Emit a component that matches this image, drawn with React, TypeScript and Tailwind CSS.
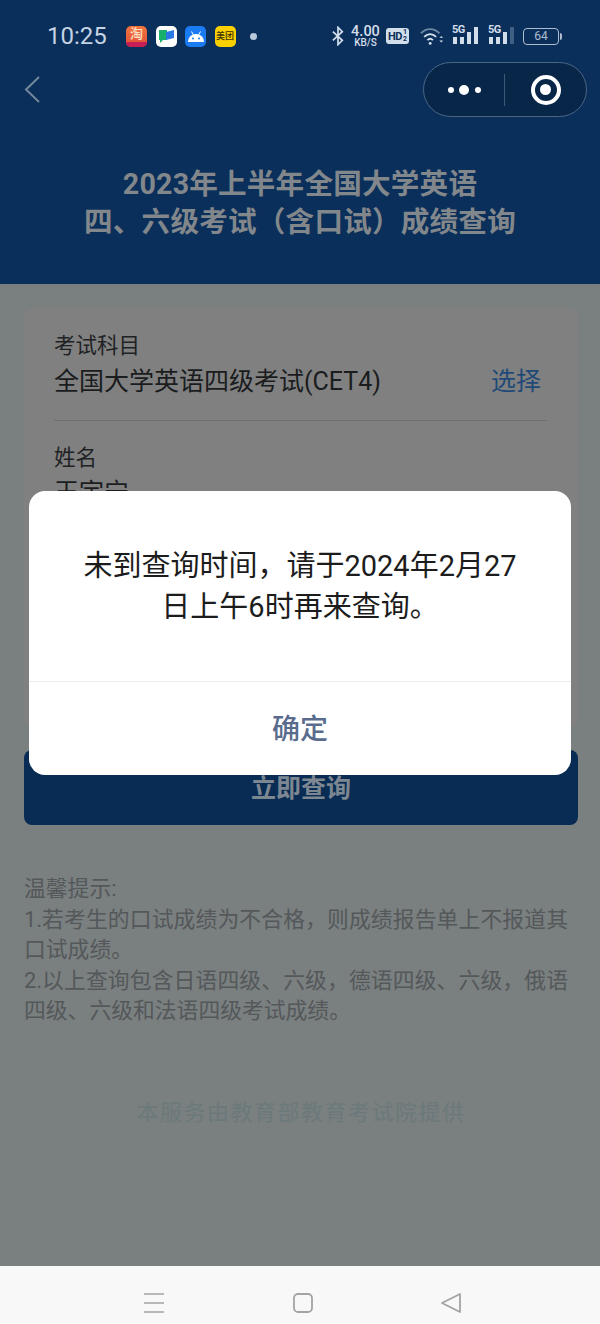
const FONT = "font-['Roboto','Noto_Sans_CJK_SC',sans-serif]";

function AppIcons() {
  return (
    <div className="flex items-center gap-[8.500px]">
      <div className="w-[21px] h-[21px] rounded-[5px] overflow-hidden bg-gradient-to-b from-[#f2733c] to-[#e0503a] flex flex-col items-center">
        <span className="h-[16px] text-[13px] leading-[16px] text-[#fbe3c8] font-medium">淘</span>
        <div className="w-full flex-1 bg-[#c81e58]" />
      </div>
      <div className="w-[21px] h-[21px] rounded-[5px] bg-white flex items-center justify-center">
        <svg width="15" height="14" viewBox="0 0 15 14">
          <path d="M0 1h8v10H4l-3 3v-3H0z" fill="#18b06a" />
          <path d="M7 3l8-2v8l-8 2z" fill="#2a78e4" />
        </svg>
      </div>
      <div className="w-[21px] h-[21px] rounded-[5px] bg-[#1a7bf2] flex items-center justify-center">
        <svg width="16" height="11" viewBox="0 0 16 11">
          <path d="M0 11a8 8 0 0 1 16 0z" fill="#fff" />
          <path d="M3.500 0.500l2 3.500M12.500 0.500l-2 3.500" stroke="#fff" strokeWidth="1" />
          <circle cx="5" cy="7.500" r="1" fill="#1a7bf2" />
          <circle cx="11" cy="7.500" r="1" fill="#1a7bf2" />
        </svg>
      </div>
      <div className="w-[21px] h-[21px] rounded-[5px] bg-[#fbd000] flex items-center justify-center text-[9px] leading-none text-[#3a3000] font-medium">
        美团
      </div>
      <div className="ml-[6px] w-[7px] h-[7px] rounded-full bg-[#b9c8dc]" />
    </div>
  );
}

function Signal({ last }: { last: string }) {
  return (
    <div className="relative w-[27px] h-[22px]">
      <span className="absolute left-0 top-[-1px] text-[11px] leading-[11px] font-bold tracking-[-0.5px] text-[#d3deeb]">5G</span>
      <svg className="absolute left-0 top-0" width="27" height="22" viewBox="0 0 27 22">
        <rect x="1" y="12" width="4" height="7" fill="#d3deeb" />
        <rect x="8" y="12" width="4" height="7" fill="#d3deeb" />
        <rect x="15" y="7" width="4" height="12" fill="#d3deeb" />
        <rect x="22" y="2" width="4" height="17" fill={last} />
      </svg>
    </div>
  );
}

function StatusBar() {
  return (
    <div className="h-[72px] pl-[47px] pr-[38px] pt-[22px] flex items-start justify-between text-[#d3deeb]">
      <div className="flex items-center gap-[20px] h-[28px]">
        <span className="w-[59px] text-[24px] leading-none text-[#c5d3e4]">10:25</span>
        <AppIcons />
      </div>
      <div className="flex items-center h-[28px]">
        <svg width="12" height="20" viewBox="0 0 14 22" fill="none" stroke="#d3deeb" strokeWidth="2">
          <path d="M1 6l11 10-5 5V1l5 5L1 16" />
        </svg>
        <div className="ml-[7px] w-[29px] flex flex-col items-center font-medium">
          <span className="text-[14.500px] leading-[13px]">4.00</span>
          <span className="text-[10px] leading-[10px]">KB/S</span>
        </div>
        <div className="ml-[6px] w-[23px] h-[16px] rounded-[3px] bg-[#d3deeb] text-[#0a2f58] flex items-center justify-center font-bold">
          <span className="text-[11px] leading-none tracking-[-0.5px]">HD</span>
          <span className="ml-[1px] flex flex-col items-center text-[7px] leading-[7px]">
            <span>1</span>
            <span>2</span>
          </span>
        </div>
        <svg className="ml-[11px]" width="24" height="20" viewBox="0 0 26 20" fill="none">
          <path d="M1 7c6-6 14-6 20 0" stroke="#6f88a6" strokeWidth="2" />
          <path d="M4.500 11c4-4 9-4 13 0" stroke="#d3deeb" strokeWidth="2" />
          <path d="M8 14.500c2-2 4-2 6 0" stroke="#d3deeb" strokeWidth="2" />
          <circle cx="11" cy="18" r="1.600" fill="#d3deeb" />
          <path d="M21 12l2-2 2 2zM21 15l2 2 2-2z" fill="#d3deeb" />
        </svg>
        <div className="ml-[8px]">
          <Signal last="#d3deeb" />
        </div>
        <div className="ml-[9px]">
          <Signal last="#3f5f85" />
        </div>
        <div className="ml-[8px] flex items-center">
          <div className="w-[36px] h-[17px] rounded-[4px] border border-[#aebdd0] text-[#aebdd0] text-[12px] leading-[15px] text-center">
            64
          </div>
          <div className="ml-[1px] w-[2px] h-[7px] rounded-r-sm bg-[#aebdd0]" />
        </div>
      </div>
    </div>
  );
}

function Capsule() {
  return (
    <div className="w-[164px] h-[55px] mr-[13px] mt-[-10px] rounded-full border border-[#4a6687] bg-[#082648] flex items-center">
      <div className="w-[80px] flex items-center justify-center gap-[5.500px]">
        <div className="w-[6px] h-[6px] rounded-full bg-white" />
        <div className="w-[10px] h-[10px] rounded-full bg-white" />
        <div className="w-[6px] h-[6px] rounded-full bg-white" />
      </div>
      <div className="w-px h-[32px] bg-[#3d5877]" />
      <div className="flex-1 flex items-center justify-center">
        <div className="w-[30px] h-[30px] rounded-full border-[4.500px] border-white flex items-center justify-center">
          <div className="w-[11px] h-[11px] rounded-full bg-white" />
        </div>
      </div>
    </div>
  );
}

export default function App() {
  return (
    <div className={`relative w-[600px] h-[1324px] overflow-hidden flex flex-col bg-[#7a7f80] ${FONT}`}>
      <header className="h-[284px] shrink-0 bg-[#0a2f5a]">
        <StatusBar />
        <div className="flex items-center justify-between pl-[24px]">
          <svg className="mt-[-10px]" width="16" height="27" viewBox="0 0 16 27" fill="none" stroke="#74879c" strokeWidth="2">
            <path d="M15 1L2 13.500 15 26" />
          </svg>
          <Capsule />
        </div>
        <h1 className="mt-[48px] text-center text-[28.600px] leading-[38px] tracking-[0.2px] font-bold text-[#82878c]">
          2023年上半年全国大学英语
          <br />
          四、六级考试（含口试）成绩查询
        </h1>
      </header>

      <main className="flex-1 pl-[24px] pr-[22px] pt-[24px]">
        <section className="h-[420px] rounded-[10px] bg-[#808080] pl-[30px] pr-[31px] pt-[23px] overflow-hidden">
          <div className="text-[21.500px] leading-[30px] text-[#1f2224]">考试科目</div>
          <div className="mt-[1px] flex items-center justify-between h-[40px]">
            <span className="text-[25px] leading-[34px] text-[#1a1c1e]">全国大学英语四级考试(CET4)</span>
            <span className="text-[25px] leading-[34px] text-[#1f4a78] mr-[6px]">选择</span>
          </div>
          <div className="mt-[18px] h-px bg-[#6d6f70]" />
          <div className="mt-[22px] text-[21.500px] leading-[30px] text-[#1f2224]">姓名</div>
          <div className="mt-[3px] text-[25px] leading-[34px] text-[#1a1c1e]">王宇宁</div>
        </section>

        <button className="mt-[22px] w-full h-[75px] rounded-[8px] bg-[#082c54] text-[25px] font-bold text-[#7d8791] pt-[3px] flex items-center justify-center">
          立即查询
        </button>

        <div className="mt-[49px] pr-[10px] text-[21.800px] leading-[30.500px] text-[#54585a] text-justify">
          <p>温馨提示:</p>
          <p>1.若考生的口试成绩为不合格，则成绩报告单上不报道其口试成绩。</p>
          <p>2.以上查询包含日语四级、六级，德语四级、六级，俄语四级、六级和法语四级考试成绩。</p>
        </div>

        <p className="mt-[71px] text-center text-[22px] leading-[30px] tracking-[1.500px] text-[#6b797a]">
          本服务由教育部教育考试院提供
        </p>
      </main>

      <nav className="h-[58px] shrink-0 bg-[#f8f8f8] flex items-center justify-between pl-[143px] pr-[138px] pt-[16px]">
        <svg width="22" height="22" viewBox="0 0 22 22" stroke="#a3a3a3" strokeWidth="1.600">
          <path d="M1 2h20M1 11h20M1 20h20" />
        </svg>
        <svg width="22" height="22" viewBox="0 0 22 22" fill="none" stroke="#a3a3a3" strokeWidth="1.800">
          <rect x="2" y="2" width="18" height="18" rx="4" />
        </svg>
        <svg width="22" height="22" viewBox="0 0 22 22" fill="none" stroke="#a3a3a3" strokeWidth="1.800" strokeLinejoin="round">
          <path d="M2 11L20 2v18z" />
        </svg>
      </nav>

      <div className="absolute left-[29px] top-[491px] w-[542px] h-[284px] rounded-[16px] bg-white flex flex-col">
        <div className="h-[190px] shrink-0 px-[54px] pt-[2px] flex items-center justify-center">
          <p className="text-[29px] leading-[41px] text-center text-[#1c1c1c]">
            未到查询时间，请于2024年2月27日上午6时再来查询。
          </p>
        </div>
        <div className="h-px bg-[#ececec]" />
        <div className="flex-1 pt-[3px] flex items-center justify-center text-[28px] font-medium text-[#5a6c8e]">确定</div>
      </div>
    </div>
  );
}
